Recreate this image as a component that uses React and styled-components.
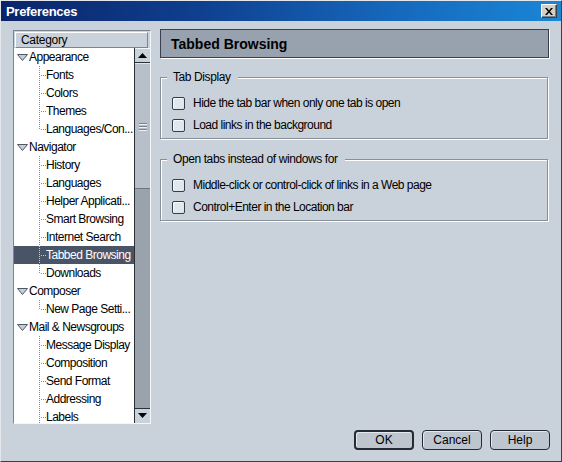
import React from 'react';
import styled, { createGlobalStyle } from 'styled-components';

const bg = '#c9d1da';
const font = '"Liberation Sans", Arial, sans-serif';

const GlobalStyle = createGlobalStyle`
  html, body {
    margin: 0;
    padding: 0;
    background: ${bg};
  }
  body {
    font-family: ${font};
    font-size: 12px;
    color: #000;
  }
`;

const Window = styled.div`
  width: 562px;
  height: 462px;
  box-sizing: border-box;
  display: flex;
  flex-direction: column;
  background: ${bg};
  border: 1px solid;
  border-color: #e4e8ec #3a3f48 #3a3f48 #e4e8ec;
  overflow: hidden;
`;

const TitleBar = styled.div`
  height: 20px;
  flex: none;
  display: flex;
  align-items: center;
  justify-content: space-between;
  padding: 0 4px 0 5px;
  background: linear-gradient(90deg, #0a246a 0%, #0f3f8e 35%, #1668bc 70%, #1a86d6 100%);
`;

const Title = styled.span`
  color: #fff;
  font-weight: bold;
  font-size: 13px;
  letter-spacing: -0.3px;
`;

const CloseButton = styled.button`
  width: 16px;
  height: 14px;
  padding: 0;
  display: flex;
  align-items: center;
  justify-content: center;
  background: #d4d0c8;
  border: 1px solid;
  border-color: #fff #404040 #404040 #fff;
  box-shadow: inset -1px -1px 0 #808080;
`;

const Content = styled.div`
  flex: 1;
  display: flex;
  gap: 9px;
  padding: 8px 12px 0 12px;
  min-height: 0;
`;

const TreePanel = styled.div`
  width: 138px;
  height: 394px;
  margin-top: 1px;
  box-sizing: border-box;
  display: flex;
  flex-direction: column;
  border: 1px solid;
  border-color: #7d8590 #f4f6f8 #f4f6f8 #7d8590;
`;

const TreeHeader = styled.div`
  height: 16px;
  margin: 1px 2px 0 1px;
  box-sizing: border-box;
  padding-left: 5px;
  line-height: 14px;
  font-size: 12px;
  letter-spacing: -0.3px;
  background: ${bg};
  border: 1px solid;
  border-color: #fff #7d8590 #7d8590 #fff;
`;

const TreeBody = styled.div`
  flex: 1;
  display: flex;
  min-height: 0;
`;

const TreeItems = styled.div`
  flex: 1;
  background: #fff;
  overflow: hidden;
`;

const Row = styled.div`
  height: 18px;
  display: flex;
  align-items: center;
  padding-left: ${({ $parent }) => ($parent ? '3px' : '25px')};
  background: ${({ $selected }) => ($selected ? '#4a5467' : 'transparent')};
  color: ${({ $selected }) => ($selected ? '#fff' : '#000')};
  white-space: nowrap;
  font-size: 12px;
  letter-spacing: -0.5px;
`;

const Twisty = styled.svg`
  flex: none;
  margin-right: 1px;
`;

const Connector = styled.svg`
  flex: none;
  display: block;
`;

const Scrollbar = styled.div`
  width: 16px;
  flex: none;
  display: flex;
  flex-direction: column;
  box-sizing: border-box;
  border-left: 1px solid #2a2f38;
  background: #9aa2ac;
`;

const ScrollButton = styled.div`
  height: 15px;
  box-sizing: border-box;
  display: flex;
  align-items: center;
  justify-content: center;
  background: ${bg};
  border-top: 1px solid ${({ $down }) => ($down ? '#2a2f38' : '#f4f6f8')};
  border-bottom: 1px solid ${({ $down }) => ($down ? bg : '#2a2f38')};
`;

const Thumb = styled.div`
  height: 126px;
  box-sizing: border-box;
  display: flex;
  flex-direction: column;
  align-items: center;
  justify-content: center;
  gap: 2px;
  background: #b7bfc9;
  border-top: 1px solid #e2e6ea;
  border-bottom: 1px solid #6e7680;
`;

const Grip = styled.span`
  width: 8px;
  height: 1px;
  background: #7b838d;
  box-shadow: 0 1px 0 #eef1f4;
`;

const Track = styled.div`
  flex: 1;
`;

const Main = styled.div`
  flex: 1;
  display: flex;
  flex-direction: column;
`;

const PageHeader = styled.div`
  height: 29px;
  box-sizing: border-box;
  display: flex;
  align-items: center;
  padding-left: 10px;
  background: #97a2ae;
  border: 1px solid #3a414c;
  box-shadow: 1px 1px 0 #fff;
  font-size: 14px;
  font-weight: bold;
  margin-bottom: 12px;
`;

const Group = styled.fieldset`
  margin: 0 1px 13px 0;
  padding: 8px 0 2px 11px;
  border: 1px solid #878f99;
  box-shadow: inset 1px 1px 0 #fff, 1px 1px 0 #fff;
`;

const Legend = styled.legend`
  margin-left: -5px;
  padding: 0 7px 0 6px;
  line-height: 14px;
  background: ${bg};
  font-size: 12px;
  letter-spacing: -0.4px;
`;

const CheckRow = styled.label`
  height: 22px;
  display: flex;
  align-items: center;
  gap: 8px;
  font-size: 12px;
  letter-spacing: -0.5px;
`;

const Box = styled.span`
  width: 13px;
  height: 13px;
  box-sizing: border-box;
  flex: none;
  border: 1px solid #353b47;
  border-radius: 2px;
  background: #dfe8ec;
  box-shadow: inset 1px 1px 0 #f6fafb;
`;

const Footer = styled.div`
  height: 37px;
  flex: none;
  box-sizing: border-box;
  display: flex;
  justify-content: flex-end;
  gap: 8px;
  padding: 6px 11px 11px 0;
`;

const Button = styled.button`
  width: 60px;
  height: 20px;
  box-sizing: border-box;
  padding: 0;
  font-family: ${font};
  font-size: 12px;
  color: #000;
  background: #bdc5cf;
  border: ${({ $default }) => ($default ? '2px' : '1px')} solid #262a32;
  border-radius: 4px;
  box-shadow: inset 1px 1px 0 #e4e8ec;
`;

const tree = [
  { label: 'Appearance', parent: true },
  { label: 'Fonts' },
  { label: 'Colors' },
  { label: 'Themes' },
  { label: 'Languages/Con...', last: true },
  { label: 'Navigator', parent: true },
  { label: 'History' },
  { label: 'Languages' },
  { label: 'Helper Applicati...' },
  { label: 'Smart Browsing' },
  { label: 'Internet Search' },
  { label: 'Tabbed Browsing', selected: true },
  { label: 'Downloads', last: true },
  { label: 'Composer', parent: true },
  { label: 'New Page Setti...', last: true },
  { label: 'Mail & Newsgroups', parent: true },
  { label: 'Message Display' },
  { label: 'Composition' },
  { label: 'Send Format' },
  { label: 'Addressing' },
  { label: 'Labels' },
];

const groups = [
  {
    title: 'Tab Display',
    items: ['Hide the tab bar when only one tab is open', 'Load links in the background'],
  },
  {
    title: 'Open tabs instead of windows for',
    items: ['Middle-click or control-click of links in a Web page', 'Control+Enter in the Location bar'],
  },
];

const TreeRow = ({ item }) => {
  const dot = item.selected ? '#c8ccd4' : '#8a8a8a';
  return (
    <Row $parent={item.parent} $selected={item.selected}>
      {item.parent ? (
        <Twisty width="11" height="7" viewBox="0 0 11 7">
          <path d="M0.5 0.5 H10.5 L5.5 6.5 Z" fill="#c4ccd8" stroke="#505866" />
        </Twisty>
      ) : (
        <Connector width="7" height="18" viewBox="0 0 7 18">
          <line x1="0.5" y1="0" x2="0.5" y2={item.last ? 10 : 18} stroke={dot} strokeDasharray="1 1" />
          <line x1="2" y1="9.5" x2="7" y2="9.5" stroke={dot} strokeDasharray="1 1" />
        </Connector>
      )}
      {item.label}
    </Row>
  );
};

const App = () => (
  <>
    <GlobalStyle />
    <Window>
      <TitleBar>
        <Title>Preferences</Title>
        <CloseButton aria-label="Close">
          <svg width="8" height="7" viewBox="0 0 8 7">
            <path d="M0 0 H2 L4 2.5 L6 0 H8 L5 3.5 L8 7 H6 L4 4.5 L2 7 H0 L3 3.5 Z" fill="#000" />
          </svg>
        </CloseButton>
      </TitleBar>
      <Content>
        <TreePanel>
          <TreeHeader>Category</TreeHeader>
          <TreeBody>
            <TreeItems>
              {tree.map((item) => (
                <TreeRow key={item.label} item={item} />
              ))}
            </TreeItems>
            <Scrollbar>
              <ScrollButton>
                <svg width="9" height="5" viewBox="0 0 9 5">
                  <path d="M4.5 0 L9 5 H0 Z" fill="#000" />
                </svg>
              </ScrollButton>
              <Thumb>
                <Grip />
                <Grip />
                <Grip />
              </Thumb>
              <Track />
              <ScrollButton $down>
                <svg width="9" height="5" viewBox="0 0 9 5">
                  <path d="M0 0 H9 L4.5 5 Z" fill="#000" />
                </svg>
              </ScrollButton>
            </Scrollbar>
          </TreeBody>
        </TreePanel>
        <Main>
          <PageHeader>Tabbed Browsing</PageHeader>
          {groups.map((group) => (
            <Group key={group.title}>
              <Legend>{group.title}</Legend>
              {group.items.map((text) => (
                <CheckRow key={text}>
                  <Box />
                  {text}
                </CheckRow>
              ))}
            </Group>
          ))}
        </Main>
      </Content>
      <Footer>
        <Button $default>OK</Button>
        <Button>Cancel</Button>
        <Button>Help</Button>
      </Footer>
    </Window>
  </>
);

export default App;
